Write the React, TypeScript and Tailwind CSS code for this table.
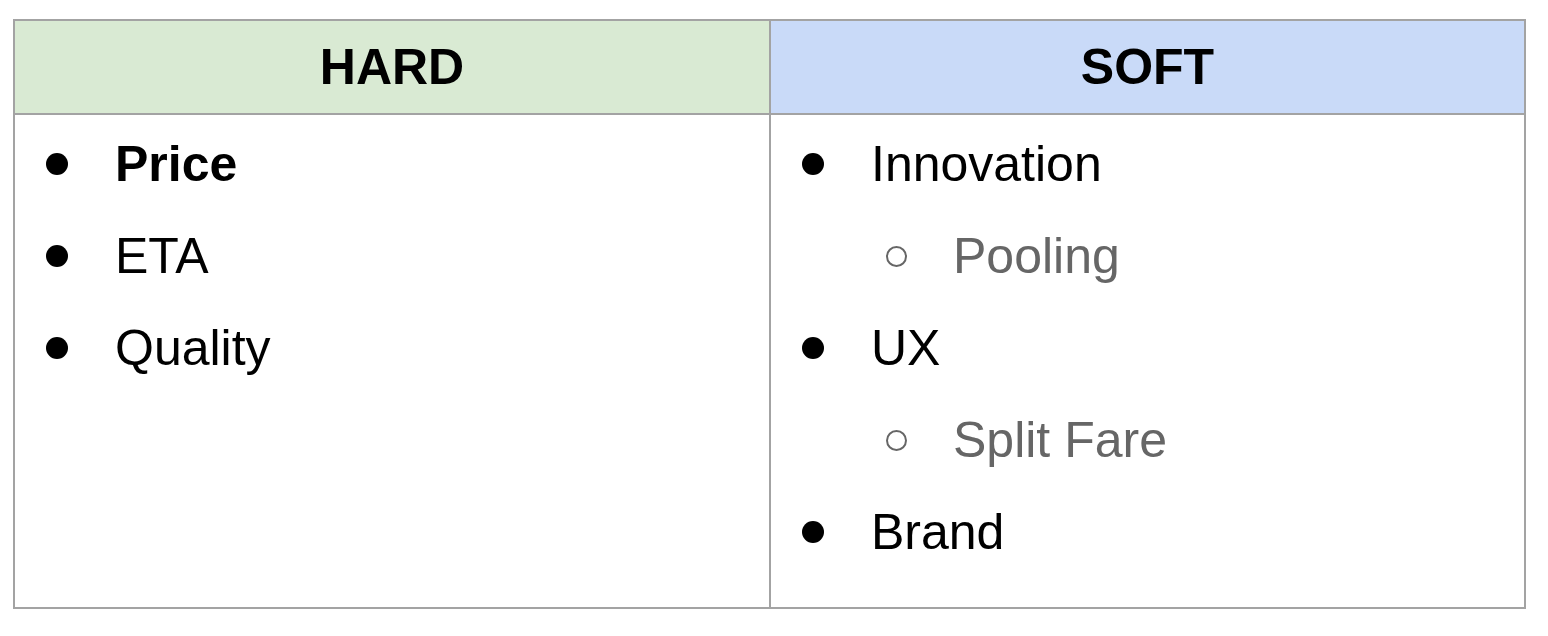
const hard = [
  { text: "Price", level: 0, bold: true },
  { text: "ETA", level: 0 },
  { text: "Quality", level: 0 },
];

const soft = [
  { text: "Innovation", level: 0 },
  { text: "Pooling", level: 1 },
  { text: "UX", level: 0 },
  { text: "Split Fare", level: 1 },
  { text: "Brand", level: 0 },
];

type Item = { text: string; level: number; bold?: boolean };

function BulletList({ items }: { items: Item[] }) {
  return (
    <div className="pt-[3px]">
      {items.map((item) =>
        item.level === 0 ? (
          <div key={item.text} className="flex items-center h-[92px]">
            <div className="w-[100px] flex items-center">
              <span className="ml-[31px] w-[22px] h-[22px] rounded-full bg-black" />
            </div>
            <span className={`text-[50px] text-black ${item.bold ? "font-bold" : ""}`}>{item.text}</span>
          </div>
        ) : (
          <div key={item.text} className="flex items-center h-[92px]">
            <div className="w-[182px] flex items-center">
              <span className="ml-[115px] w-[21px] h-[21px] rounded-full border-2 border-[#666666]" />
            </div>
            <span className="text-[50px] text-[#666666]">{item.text}</span>
          </div>
        )
      )}
    </div>
  );
}

export default function App() {
  return (
    <div className="min-h-screen bg-white pl-[13px] pt-[19px]" style={{ fontFamily: '"Liberation Sans", Arial, sans-serif' }}>
      <div className="w-[1513px] border-2 border-[#a3a3a3] grid grid-cols-[756px_753px]">
        <div className="h-[94px] bg-[#d9ead3] border-b-2 border-r-2 border-[#a3a3a3] flex items-center justify-center">
          <span className="text-[50px] font-bold text-black">HARD</span>
        </div>
        <div className="h-[94px] bg-[#c9daf8] border-b-2 border-[#a3a3a3] flex items-center justify-center">
          <span className="text-[50px] font-bold text-black">SOFT</span>
        </div>
        <div className="h-[492px] border-r-2 border-[#a3a3a3]">
          <BulletList items={hard} />
        </div>
        <div className="h-[492px]">
          <BulletList items={soft} />
        </div>
      </div>
    </div>
  );
}
